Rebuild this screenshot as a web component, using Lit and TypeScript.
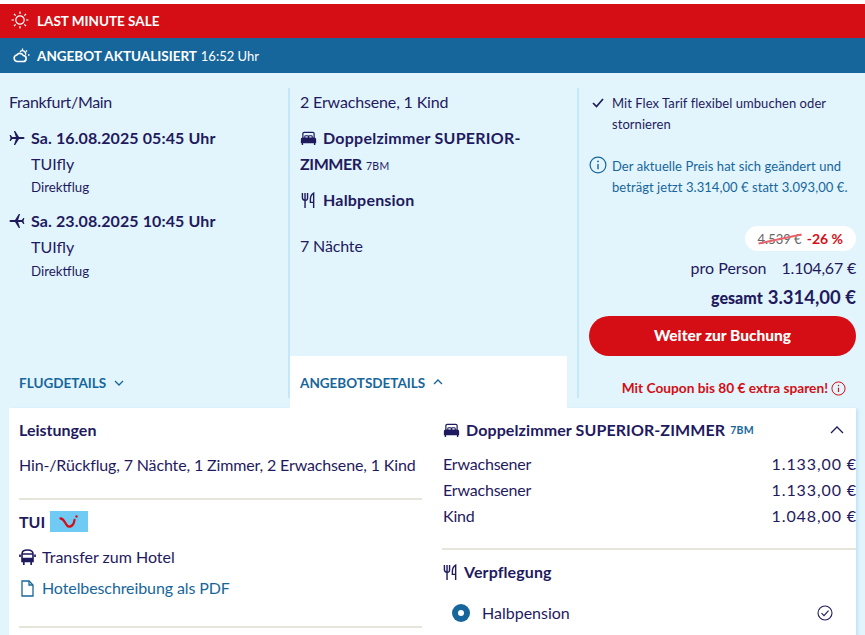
import { LitElement, html, css, svg } from "lit";
import { customElement } from "lit/decorators.js";

const bed = svg`<svg class="ic" viewBox="0 0 18 16" width="17" height="15" fill="none" stroke="currentColor" stroke-width="1.300"><path d="M3 7.500V3q0-1.500 1.500-1.500h9Q15 1.500 15 3v4.500"/><path d="M5 7.500V6q0-1 1-1h1.800q1 0 1 1v1.500M9.200 7.500V6q0-1 1-1H12q1 0 1 1v1.500" stroke-width="1.100"/><path d="M1.500 12.500V9q0-1.500 1.500-1.500h12q1.500 0 1.500 1.500v3.500z" fill="currentColor"/><path d="M2.500 12.500V15M15.500 12.500V15" stroke-width="1.500"/></svg>`;
const cutlery = svg`<svg class="ic" viewBox="0 0 16 18" width="15" height="17" fill="none" stroke="currentColor" stroke-width="1.500"><path d="M1.500 1V6q0 2.500 2.800 2.800T7 6V1M4.300 1V17"/><path d="M13.500 17V1.200Q10 3 10 8v3h3.500"/></svg>`;
const chevDown = svg`<svg viewBox="0 0 10 6" width="10" height="6" fill="none" stroke="currentColor" stroke-width="1.300"><path d="M1 1l4 4 4-4"/></svg>`;
const chevUp = svg`<svg viewBox="0 0 10 6" width="10" height="6" fill="none" stroke="currentColor" stroke-width="1.300"><path d="M1 5l4-4 4 4"/></svg>`;
const chevUpBig = svg`<svg viewBox="0 0 14 8" width="14" height="8" fill="none" stroke="currentColor" stroke-width="1.300"><path d="M1 7l6-6 6 6"/></svg>`;
const info = svg`<svg viewBox="0 0 18 18" width="18" height="18" fill="none" stroke="currentColor" stroke-width="1.200"><circle cx="9" cy="9" r="7.900"/><path d="M9 8v5.200" stroke-width="1.400"/><circle cx="9" cy="5.400" r=".9" fill="currentColor" stroke="none"/></svg>`;
const plane = svg`<path d="M15.600 8c0-.8-1-1.100-1.900-1.100H10L6.200 1H4.900l2 5.900H3.200L1.700 5H.6l.9 3-.9 3h1.100l1.500-1.900h3.700l-2 5.900h1.300L10 9.100h3.700c.9 0 1.900-.3 1.900-1.100z"/>`;

@customElement("app-root")
export class AppRoot extends LitElement {
  static styles = css`
    :host { display: block; height: 635px; overflow: hidden; background: #fff; color: #1f1a5e; font-family: Lato, "Noto Sans", sans-serif; font-size: 16px; line-height: 24px; padding-top: 4px; box-sizing: border-box; }
    .ic { flex: none; display: block; }
    .banner { display: flex; align-items: center; color: #fff; font-weight: 700; font-size: 13.500px; padding-left: 11px; gap: 8px; }
    .banner.red { background: #d40e14; height: 34px; }
    .banner.red svg { margin-bottom: 3px; }
    .banner.blue { background: #17669b; height: 35px; padding-left: 13px; gap: 7px; }
    .banner small { font-weight: 400; font-size: 13px; margin-left: 1px; }
    .page { background: #e2f5fd; height: 562px; }
    .panel { height: 335px; padding-top: 15px; box-sizing: border-box; display: grid; grid-template-columns: 288px 289px 288px; }
    .col { height: 310px; position: relative; box-sizing: border-box; display: flex; flex-direction: column; }
    .col + .col { border-left: 2px solid #c4e8f9; }
    .c1 { padding: 2px 0 0 9px; }
    .c2 { padding: 2px 0 0 10px; }
    .c3 { padding: 5px 9px 0 10px; }
    .city { letter-spacing: -.35px; }
    .people { letter-spacing: -.15px; }
    .leg { display: flex; align-items: center; gap: 6px; font-weight: 700; letter-spacing: .1px; margin-top: 12px; height: 24px; }
    .leg svg { fill: currentColor; flex: none; }
    .leg .back { transform: scaleX(-1); }
    .air { padding-left: 22px; margin-top: 2px; }
    .sub { padding-left: 22px; font-size: 13.300px; line-height: 22px; margin-bottom: 11px; margin-top: 1px; }
    .sub.first { margin-top: 0; }
    .tab { color: #17669b; font-weight: 700; font-size: 13.500px; display: flex; align-items: center; gap: 8px; }
    .t1 { margin-top: auto; padding: 0 0 3px 10px; height: 24px; }
    .t2 { position: absolute; left: 0; top: 268px; width: 277px; height: 52px; background: #fff; padding: 15px 0 0 10px; box-sizing: border-box; align-items: flex-start; }
    .t2 span { line-height: 24px; }
    .t2 svg { margin-top: 8px; }
    .bold { font-weight: 700; letter-spacing: .2px; display: flex; gap: 7px; align-items: center; }
    .room { font-weight: 700; letter-spacing: .25px; margin-top: 11px; line-height: 26px; width: 240px; }
    .room .ic { display: inline-block; vertical-align: -2px; margin-right: 6px; }
    .room .tail { letter-spacing: -.4px; }
    .code { font-size: 10.500px; font-weight: 400; letter-spacing: .3px; }
    .flex { display: flex; gap: 5px; font-size: 13px; letter-spacing: .06px; line-height: 21px; flex: none; }
    .check { width: 15px; flex: none; padding-left: 3px; }
    .note { color: #17669b; margin-top: 21px; }
    .note svg { flex: none; }
    .pricebox { display: flex; flex-direction: column; align-items: flex-end; margin-top: 28px; flex: none; }
    .pill { background: #fff; border-radius: 13px; height: 25px; padding: 0 13px; font-size: 14px; display: flex; align-items: center; gap: 5px; color: #666; }
    .pill s { position: relative; text-decoration: none; font-size: 13px; }
    .pill s::after { content: ""; position: absolute; left: 0; right: 0; top: 11px; height: 1.500px; background: #e8636a; transform: rotate(-12deg); }
    .pill b { color: #d40e14; }
    .pp { display: flex; gap: 15px; margin-top: 5px; line-height: 24px; }
    .pp span:last-child { letter-spacing: -.2px; }
    .total { font-weight: 900; font-size: 16px; margin-top: 4px; display: flex; align-items: baseline; gap: 5px; line-height: 26px; }
    .total span { font-size: 18.500px; font-weight: 700; }
    .btn { width: 267px; height: 40px; flex: none; border-radius: 20px; background: #d40e14; color: #fff; font-weight: 900; font-size: 15.500px; display: flex; align-items: center; justify-content: center; margin-top: 5px; padding-bottom: 2px; box-sizing: border-box; align-self: flex-end; }
    .coupon { color: #d40e14; font-weight: 700; font-size: 13.700px; display: flex; align-items: center; gap: 3px; margin: 20px 10px 0 0; align-self: flex-end; flex: none; }
    .coupon svg { width: 15px; height: 15px; }
    .card { margin: 0 9px; background: #fff; box-shadow: 2px 1px 3px rgba(150, 205, 235, .45); display: grid; grid-template-columns: 403px 414px; gap: 20px; height: 240px; padding: 10px 0 0 10px; box-sizing: border-box; overflow: hidden; width: 847px; }
    .h { font-weight: 700; line-height: 24px; }
    .line { margin-top: 11px; letter-spacing: -.14px; }
    hr { border: 0; height: 2px; background: #e7e4da; margin: 0; }
    .tui { display: flex; align-items: center; gap: 5px; font-weight: 700; font-size: 16px; margin-top: 11px; height: 21px; }
    .logo { width: 38px; height: 21px; background: #70cbf4; display: flex; align-items: center; justify-content: center; }
    .row { display: flex; align-items: center; gap: 6px; }
    .link { color: #17669b; letter-spacing: -.1px; }
    .rh { display: flex; align-items: center; gap: 6px; font-weight: 700; letter-spacing: .1px; margin-left: 1px; }
    .rh .code { color: #17669b; font-weight: 700; margin-left: -1px; }
    .rh .chev { margin-left: auto; margin-right: 12px; color: #1f1a5e; display: flex; }
    .pr { display: flex; justify-content: space-between; line-height: 26px; letter-spacing: -.2px; margin-left: 1px; }
    .pr span:last-child { letter-spacing: .9px; margin-right: -1px; }
    .radio { width: 18px; height: 18px; border-radius: 50%; background: #17669b; display: flex; align-items: center; justify-content: center; margin-left: 10px; }
    .radio i { width: 6px; height: 6px; background: #fff; border-radius: 50%; }
  `;

  render() {
    return html`
      <div class="banner red">
        <svg width="18" height="18" viewBox="0 0 18 18" fill="none" stroke="#fff" stroke-width="1.200"><circle cx="9" cy="9" r="4.200"/><path d="M9 .5v2.500M9 15v2.500M.5 9H3M15 9h2.500M3 3l1.700 1.700M13.300 13.300L15 15M3 15l1.700-1.700M13.300 4.700L15 3"/></svg>
        <span>LAST MINUTE SALE</span>
      </div>
      <div class="banner blue">
        <svg width="17" height="16" viewBox="0 0 17 16" fill="none" stroke="#fff" stroke-width="1.600"><path d="M4 13.500h6a3 3 0 0 0 .3-6A3.800 3.800 0 0 0 3.800 7 3.300 3.300 0 0 0 4 13.500z"/><path d="M7 3.800a3.200 3.200 0 0 1 5.500 3M9.500 .5V2M14 2.500l-1 1M16.500 7H15" stroke-width="1.300"/></svg>
        <span>ANGEBOT AKTUALISIERT <small>16:52 Uhr</small></span>
      </div>
      <div class="page">
        <div class="panel">
          <div class="col c1">
            <div class="city">Frankfurt/Main</div>
            <div class="leg"><svg viewBox="0 0 16 16" width="16" height="16">${plane}</svg><span>Sa. 16.08.2025 05:45 Uhr</span></div>
            <div class="air">TUIfly</div>
            <div class="sub first">Direktflug</div>
            <div class="leg" style="margin-top:0"><svg class="back" viewBox="0 0 16 16" width="16" height="16">${plane}</svg><span>Sa. 23.08.2025 10:45 Uhr</span></div>
            <div class="air">TUIfly</div>
            <div class="sub">Direktflug</div>
            <div class="tab t1"><span>FLUGDETAILS</span>${chevDown}</div>
          </div>
          <div class="col c2">
            <div class="people">2 Erwachsene, 1 Kind</div>
            <div class="room">${bed}<span>Doppelzimmer SUPERIOR-</span><span class="tail">ZIMMER</span> <span class="code">7BM</span></div>
            <div class="bold" style="margin-top:9px;margin-left:1px">${cutlery}<span>Halbpension</span></div>
            <div class="people" style="margin-top:22px">7 Nächte</div>
            <div class="tab t2"><span>ANGEBOTSDETAILS</span>${chevUp}</div>
          </div>
          <div class="col c3">
            <div class="flex">
              <span class="check"><svg width="12" height="10" viewBox="0 0 12 10" fill="none" stroke="currentColor" stroke-width="1.700"><path d="M1 5l3.500 3.500L11 1"/></svg></span>
              <span>Mit Flex Tarif flexibel umbuchen oder stornieren</span>
            </div>
            <div class="flex note">${info}<span>Der aktuelle Preis hat sich geändert und beträgt jetzt 3.314,00 € statt 3.093,00 €.</span></div>
            <div class="pricebox">
              <div class="pill"><s>4.539 €</s><b>-26 %</b></div>
              <div class="pp"><span>pro Person</span><span>1.104,67 €</span></div>
              <div class="total">gesamt <span>3.314,00 €</span></div>
            </div>
            <div class="btn">Weiter zur Buchung</div>
            <div class="coupon">Mit Coupon bis 80 € extra sparen! ${info}</div>
          </div>
        </div>
        <div class="card">
          <div>
            <div class="h">Leistungen</div>
            <div class="line">Hin-/Rückflug, 7 Nächte, 1 Zimmer, 2 Erwachsene, 1 Kind</div>
            <hr style="margin-top:21px" />
            <div class="tui">TUI <span class="logo"><svg width="20" height="14" viewBox="0 0 20 14" fill="none" stroke="#d40e14" stroke-width="2.300" stroke-linecap="round"><path d="M1.500 3.500C4 3.500 5.500 6.500 7 9c1.500 3 4 3.200 6 1.500 1.500-1.300 2.300-3.500 2.500-5.500"/><circle cx="17.500" cy="1.500" r="1.200" fill="#d40e14" stroke="none"/></svg></span></div>
            <div class="row" style="margin-top:13px">
              <svg class="ic" width="17" height="17" viewBox="0 0 17 17" fill="none" stroke="currentColor" stroke-width="1.600"><path d="M3 12.500V5q0-4 5.500-4T14 5v7.500z"/><path d="M3 5h11M3 9.500h11" stroke-width="1.500"/><path d="M3 10h11v3H3z" fill="currentColor" stroke="none"/><path d="M1 5.500v2.500M16 5.500v2.500M4.800 13v3M12.200 13v3" stroke-width="1.700"/></svg>
              <span>Transfer zum Hotel</span>
            </div>
            <div class="row link" style="margin-top:7px">
              <svg class="ic" width="15" height="17" viewBox="0 0 15 17" fill="none" stroke="currentColor" stroke-width="1.300" style="margin:0 1px 0 1px"><path d="M2 1h7l4 4v11H2z"/><path d="M9 1v4h4"/></svg>
              <span>Hotelbeschreibung als PDF</span>
            </div>
            <hr style="margin-top:26px" />
          </div>
          <div>
            <div class="rh">${bed}<span>Doppelzimmer SUPERIOR-ZIMMER</span><span class="code">7BM</span><span class="chev">${chevUpBig}</span></div>
            <div style="margin-top:9px">
              <div class="pr"><span>Erwachsener</span><span>1.133,00 €</span></div>
              <div class="pr"><span>Erwachsener</span><span>1.133,00 €</span></div>
              <div class="pr"><span>Kind</span><span>1.048,00 €</span></div>
            </div>
            <hr style="margin-top:19px" />
            <div class="rh" style="margin-top:10px">${cutlery}<span>Verpflegung</span></div>
            <div class="row" style="margin-top:17px;gap:12px">
              <span class="radio"><i></i></span><span>Halbpension</span>
              <svg style="margin:0 23px 0 auto" width="16" height="16" viewBox="0 0 16 16" fill="none" stroke="currentColor" stroke-width="1.100"><circle cx="8" cy="8" r="7"/><path d="M4.500 8.200l2.500 2.500 4.500-5"/></svg>
            </div>
          </div>
        </div>
      </div>
    `;
  }
}
